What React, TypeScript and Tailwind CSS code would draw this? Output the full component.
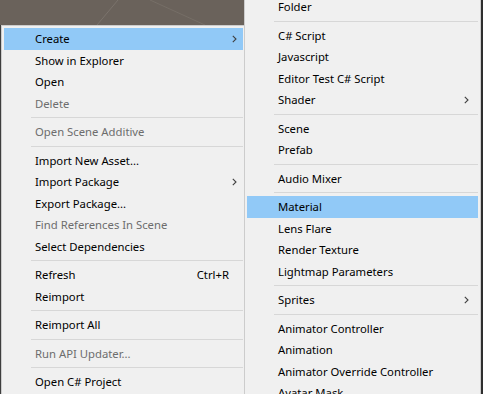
import React from 'react';

type Item =
  | { sep: true }
  | { label: string; arrow?: boolean; active?: boolean; disabled?: boolean; shortcut?: string };

const leftItems: Item[] = [
  { label: 'Create', arrow: true, active: true },
  { label: 'Show in Explorer' },
  { label: 'Open' },
  { label: 'Delete', disabled: true },
  { sep: true },
  { label: 'Open Scene Additive', disabled: true },
  { sep: true },
  { label: 'Import New Asset...' },
  { label: 'Import Package', arrow: true },
  { label: 'Export Package...' },
  { label: 'Find References In Scene', disabled: true },
  { label: 'Select Dependencies' },
  { sep: true },
  { label: 'Refresh', shortcut: 'Ctrl+R' },
  { label: 'Reimport' },
  { sep: true },
  { label: 'Reimport All' },
  { sep: true },
  { label: 'Run API Updater...', disabled: true },
  { sep: true },
  { label: 'Open C# Project' },
];

const rightItems: Item[] = [
  { label: 'Folder' },
  { sep: true },
  { label: 'C# Script' },
  { label: 'Javascript' },
  { label: 'Editor Test C# Script' },
  { label: 'Shader', arrow: true },
  { sep: true },
  { label: 'Scene' },
  { label: 'Prefab' },
  { sep: true },
  { label: 'Audio Mixer' },
  { sep: true },
  { label: 'Material', active: true },
  { label: 'Lens Flare' },
  { label: 'Render Texture' },
  { label: 'Lightmap Parameters' },
  { sep: true },
  { label: 'Sprites', arrow: true },
  { sep: true },
  { label: 'Animator Controller' },
  { label: 'Animation' },
  { label: 'Animator Override Controller' },
  { label: 'Avatar Mask' },
];

function Chevron() {
  return (
    <svg width="5" height="8" viewBox="0 0 5 8" className="shrink-0">
      <path d="M0.8 0.8 L4 4 L0.8 7.2" fill="none" stroke="#404040" strokeWidth="1.1" />
    </svg>
  );
}

function MenuList({ items, arrowPad }: { items: Item[]; arrowPad: string }) {
  return (
    <>
      {items.map((item, i) => {
        if ('sep' in item) {
          return (
            <div key={i} className="py-[3px] pl-[27px]">
              <div className="h-px bg-[#d7d7d7]" />
            </div>
          );
        }
        return (
          <div
            key={i}
            className={`flex items-center h-[21.5px] pl-[31px] ${arrowPad} ${
              item.active ? 'bg-[#91c9f7]' : ''
            } ${item.disabled ? 'text-[#6d6d6d]' : 'text-black'}`}
          >
            <span className="flex-1 whitespace-nowrap">{item.label}</span>
            {item.shortcut && <span className="mr-[8px]">{item.shortcut}</span>}
            {item.arrow && <Chevron />}
          </div>
        );
      })}
    </>
  );
}

export default function App() {
  return (
    <div
      className="w-[483px] h-[394px] overflow-hidden flex bg-[#2e2e2e] text-[11.3px] leading-none"
      style={{ fontFamily: '"Segoe UI", "Noto Sans", sans-serif' }}
    >
      {/* Left context menu under the scene view */}
      <div className="w-[244px] shrink-0 flex flex-col">
        <div className="h-[25px] shrink-0 bg-[#6a625b] relative">
          <svg width="244" height="25" className="absolute inset-0">
            <line x1="97" y1="25" x2="118" y2="0" stroke="#7b736c" strokeWidth="1" />
            <line x1="150" y1="0" x2="205" y2="25" stroke="#766e67" strokeWidth="1" />
          </svg>
        </div>
        <div className="flex-1 flex bg-[#3e3e3e] pl-px">
          <div className="flex-1 bg-[#f0f0f0] border-t border-l border-[#cccccc] pt-[2px] pl-[2px] pr-[1px]">
            <MenuList items={leftItems} arrowPad="pr-[6px]" />
          </div>
        </div>
      </div>

      {/* Create submenu */}
      <div className="w-[237px] shrink-0 -mt-[7px] bg-[#f0f0f0] border border-[#cccccc] p-[2px] self-start">
        <MenuList items={rightItems} arrowPad="pr-[9px]" />
      </div>
    </div>
  );
}
